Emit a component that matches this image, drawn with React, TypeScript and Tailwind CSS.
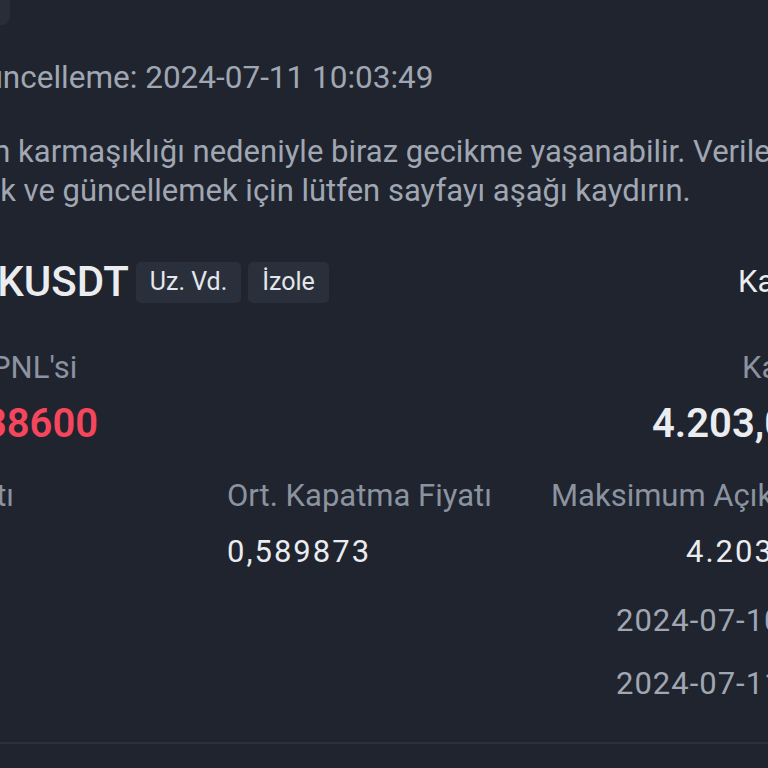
import type { ReactNode } from 'react'

function Badge({ children }: { children: ReactNode }) {
  return (
    <span className="h-[41px] px-[14px] flex items-center rounded-[5px] bg-[#2a303b] text-[25px] text-[#e3e6ea]">
      {children}
    </span>
  )
}

// right cell pinned to the right edge, text runs off the screen
function RightCell({ w, className, children }: { w: string; className: string; children: ReactNode }) {
  return <div className={`ml-auto shrink-0 whitespace-nowrap ${w} ${className}`}>{children}</div>
}

export default function App() {
  return (
    <div className="w-[768px] h-[768px] overflow-hidden bg-[#1f242e] font-['Roboto','Liberation_Sans',sans-serif] text-[#eaecef]">
      {/* back button edge */}
      <div className="h-[25px] w-[10px] rounded-br-[8px] bg-[#282e38]" />

      {/* last update */}
      <div className="mt-[33px] h-[40px] leading-[40px] text-[31.5px] text-[#a0a7b3] whitespace-nowrap">
        <span className="block ml-[-36px]">Güncelleme: 2024-07-11 10:03:49</span>
      </div>

      {/* notice */}
      <div className="mt-[34px] text-[31px] leading-[39px] text-[#a0a7b3] whitespace-nowrap">
        <span className="block ml-[-110px]">Sistemin karmaşıklığı nedeniyle biraz gecikme yaşanabilir. Verileri</span>
        <span className="block ml-[-123px]">yenilemek ve güncellemek için lütfen sayfayı aşağı kaydırın.</span>
      </div>

      {/* symbol row */}
      <div className="mt-[51px] h-[42px] flex items-center whitespace-nowrap">
        <span className="ml-[-57px] text-[42px] font-medium leading-[42px] text-[#eaecef] mr-[7px]">ARKUSDT</span>
        <div className="flex gap-[7px]">
          <Badge>Uz. Vd.</Badge>
          <Badge>İzole</Badge>
        </div>
        <RightCell w="w-[30px]" className="text-[31px] text-[#eaecef]">Kapatıldı</RightCell>
      </div>

      {/* pnl labels */}
      <div className="mt-[45px] h-[40px] leading-[40px] flex text-[31px] text-[#8c93a0] whitespace-nowrap">
        <span className="ml-[-128px]">Kapanış PNL'si</span>
        <RightCell w="w-[26px]" className="">Kapatılan Hacim</RightCell>
      </div>

      {/* pnl values */}
      <div className="mt-[12px] h-[48px] leading-[48px] flex text-[40px] font-semibold whitespace-nowrap">
        <span className="ml-[-63px] text-[#f6465d]">-1,38600</span>
        <RightCell w="w-[116px]" className="text-[#eaecef]">4.203,0 ARK</RightCell>
      </div>

      {/* price labels */}
      <div className="mt-[28px] h-[40px] leading-[40px] grid grid-cols-[227px_324px_217px] text-[31px] text-[#8c93a0] whitespace-nowrap">
        <div className="flex justify-end">
          <span className="mr-[213px]">Ort. Açılış Fiyatı</span>
        </div>
        <div>Ort. Kapatma Fiyatı</div>
        <div>Maksimum Açık Pozisyon</div>
      </div>

      {/* price values */}
      <div className="mt-[16px] h-[40px] leading-[40px] grid grid-cols-[227px_324px_217px] text-[31px] tracking-[2px] text-[#eaecef] whitespace-nowrap">
        <div className="flex justify-end">
          <span className="mr-[240px]">0,5909</span>
        </div>
        <div>0,589873</div>
        <div className="flex">
          <RightCell w="w-[82px]" className="">4.203,0 ARK</RightCell>
        </div>
      </div>

      {/* times */}
      <div className="mt-[29px] h-[40px] leading-[40px] flex text-[31px] tracking-[1px] text-[#a0a7b3] whitespace-nowrap">
        <RightCell w="w-[152px]" className="">2024-07-10 21:14:05</RightCell>
      </div>
      <div className="mt-[23px] h-[40px] leading-[40px] flex text-[31px] tracking-[1px] text-[#a0a7b3] whitespace-nowrap">
        <RightCell w="w-[152px]" className="">2024-07-11 08:52:31</RightCell>
      </div>

      <div className="mt-[38px] h-[2px] bg-[#2b313b]" />
    </div>
  )
}
